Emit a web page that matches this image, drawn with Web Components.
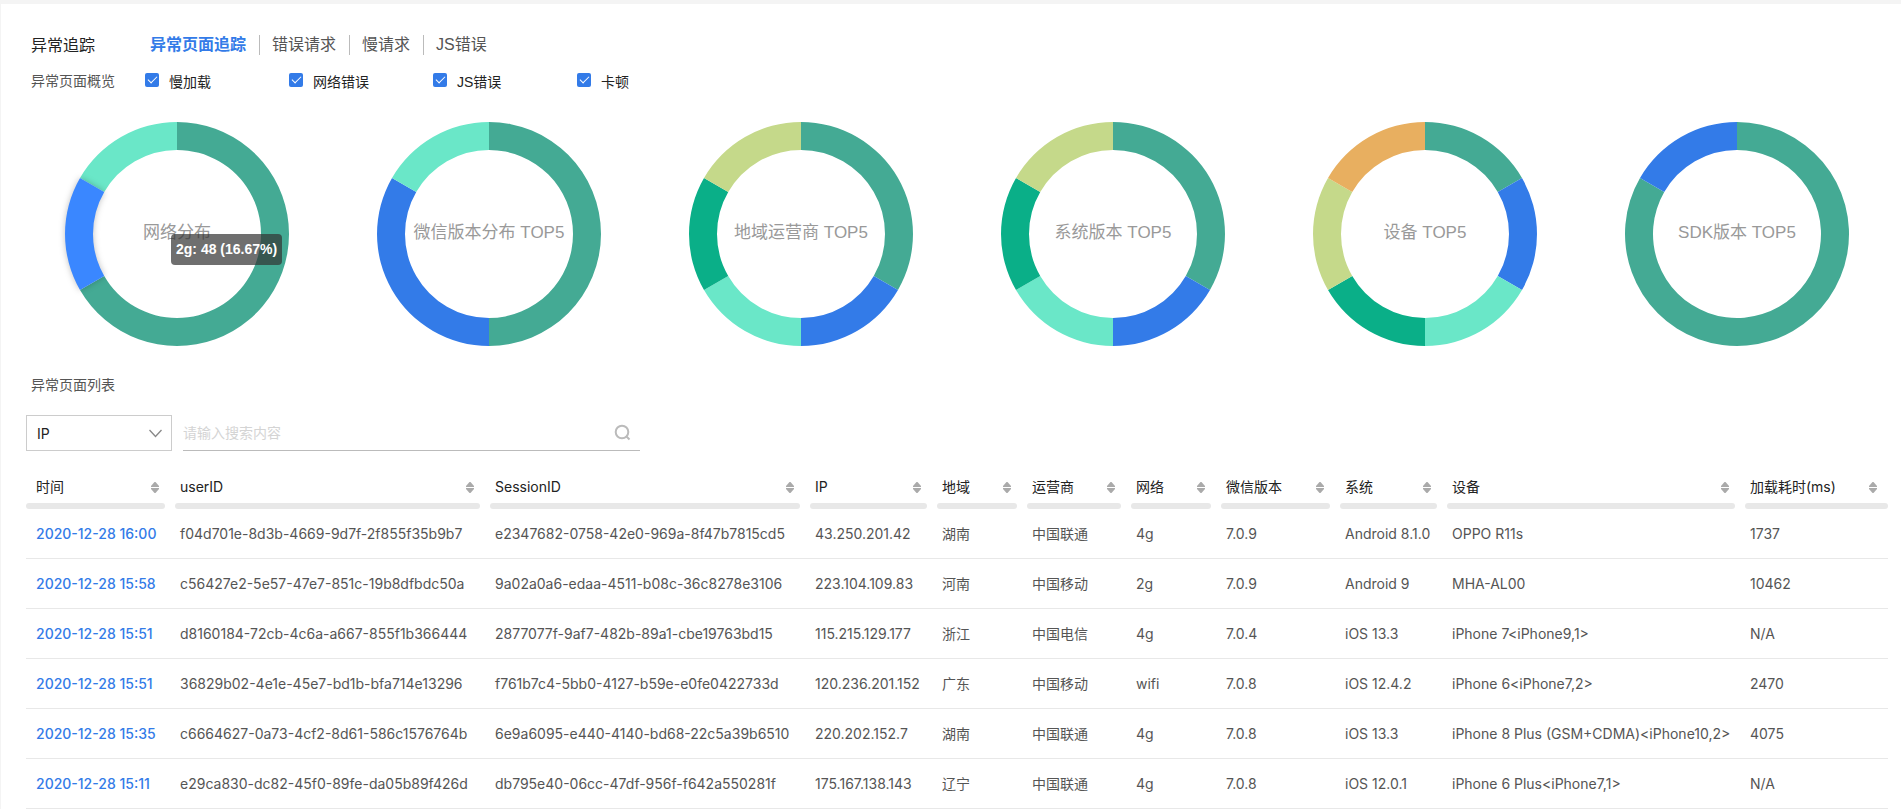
<!DOCTYPE html>
<html lang="zh-CN">
<head>
<meta charset="utf-8">
<title>异常追踪</title>
<style>
body { margin: 0; background: #fff; font-family: Inter, "Liberation Sans", "Noto Sans CJK SC", sans-serif; font-size: 14px; color: #555; }
</style>
</head>
<body>
<trace-page></trace-page>
<script>
const define = (name, html, setup) => {
  const tpl = document.createElement('template');
  tpl.innerHTML = html;
  customElements.define(name, class extends HTMLElement {
    connectedCallback() {
      if (this.shadowRoot) return;
      this.attachShadow({ mode: 'open' }).append(tpl.content.cloneNode(true));
      if (setup) setup(this, this.shadowRoot);
    }
  });
};

define('trace-tabs', `
<style>
:host { display: flex; align-items: center; font-family: "Liberation Sans", "Noto Sans CJK SC", sans-serif; font-size: 16px; line-height: 20px; }
nav { display: flex; }
a { color: #555; text-decoration: none; padding: 0 13px 0 12px; border-left: 1px solid #bbb; }
a:first-child { border-left: 0; padding-left: 0; color: #337be8; font-weight: 700; }
</style>
<nav><a href="#page" aria-current="page">异常页面追踪</a><a href="#request">错误请求</a><a href="#slow">慢请求</a><a href="#js">JS错误</a></nav>`);

define('check-item', `
<style>
:host { display: block; font-family: "Liberation Sans", "Noto Sans CJK SC", sans-serif; }
label { display: flex; align-items: center; gap: 10px; color: #222; line-height: 20px; padding-top: 2px; }
input { appearance: none; margin: 0 0 5px; width: 14px; height: 14px; border-radius: 2px; background: #337be8; display: grid; place-items: center; }
input:checked::before { content: ""; width: 9px; height: 5px; box-sizing: border-box; border: solid #fff; border-width: 0 0 1px 1px; transform: rotate(-45deg); margin-bottom: 3px; }
</style>
<label><input type="checkbox" checked><slot></slot></label>`);

define('ring-chart', `
<style>
:host { display: flex; justify-content: center; }
.ring { position: relative; display: grid; place-items: center; }
svg { display: block; grid-area: 1 / 1; overflow: visible; }
.title { grid-area: 1 / 1; font-family: "Liberation Sans", "Noto Sans CJK SC", sans-serif; font-size: 17px; line-height: 20px; color: #999; white-space: nowrap; padding-bottom: 2px; }
::slotted([slot=tip]) { position: absolute; left: 106px; top: 112px; }
</style>
<div class="ring">
<svg width="224" height="224" viewBox="-112 -112 224 224" aria-hidden="true"></svg>
<span class="title"><slot></slot></span>
<slot name="tip"></slot>
</div>`, (host, root) => {
  const svg = root.querySelector('svg');
  const at = (r, t) => {
    const a = t / 6 * 2 * Math.PI;
    return (r * Math.sin(a)).toFixed(2) + ' ' + (-r * Math.cos(a)).toFixed(2);
  };
  let from = 0, raised = null;
  for (const part of host.getAttribute('parts').split(' ')) {
    const [share, color, active] = part.split(':');
    const to = from + Number(share), big = share > 3 ? 1 : 0;
    const path = document.createElementNS('http://www.w3.org/2000/svg', 'path');
    path.setAttribute('d', `M${at(112, from)}A112 112 0 ${big} 1 ${at(112, to)}L${at(84, to)}A84 84 0 ${big} 0 ${at(84, from)}Z`);
    path.setAttribute('fill', color);
    if (active) { path.style.filter = 'drop-shadow(0 0 3px rgba(0,0,0,.25))'; raised = path; }
    svg.append(path);
    from = to;
  }
  if (raised) svg.append(raised);
});

define('chart-tip', `
<style>
:host { display: block; box-sizing: border-box; padding: 5px; height: 31px; border-radius: 4px; background: rgba(50,50,50,.7); color: #fff; font: 700 14px/20px "Liberation Sans", sans-serif; white-space: nowrap; }
</style><slot></slot>`);

define('search-bar', `
<style>
:host { display: flex; gap: 11px; }
.pick { display: grid; width: 146px; }
select { grid-area: 1 / 1; appearance: none; box-sizing: border-box; height: 36px; border: 1px solid #ccc; border-radius: 0; background: #fff; color: #222; font: inherit; padding: 0 10px; }
.pick svg { grid-area: 1 / 1; place-self: center end; margin-right: 10px; pointer-events: none; }
.find { display: flex; align-items: center; box-sizing: border-box; width: 457px; height: 36px; border-bottom: 1px solid #bbb; }
input { flex: 1; border: 0; outline: 0; padding: 0; font: inherit; color: #222; background: none; }
input::placeholder { color: #d4d4d4; }
button { border: 0; padding: 0; margin-right: 9px; background: none; display: flex; }
</style>
<div class="pick"><select aria-label="搜索字段"><option>IP</option></select>
<svg width="13" height="9" viewBox="0 0 13 9" fill="none" stroke="#888" stroke-width="1.3"><path d="M.5 1l6 6.500 6-6.500"/></svg></div>
<div class="find"><input type="text" aria-label="搜索" placeholder="请输入搜索内容">
<button aria-label="搜索"><svg width="17" height="17" viewBox="0 0 17 17" fill="none" stroke="#bbb" stroke-width="2"><circle cx="8" cy="8" r="6.300"/><path d="M12 12l3.500 3.500"/></svg></button></div>`);

define('sort-mark', `
<style>:host { display: block; } svg { display: block; }</style>
<svg width="8" height="11" viewBox="0 0 8 11" fill="#aaa"><path d="M3.500 0h1L8 4v1H0V4z"/><path d="M3.500 11h1L8 7V6H0v1z"/></svg>`);

define('trace-table', `
<style>
:host { display: block; }
table { width: 100%; border-collapse: separate; border-spacing: 0; table-layout: fixed; }
th { padding: 0; font-weight: 400; color: #222; text-align: left; }
.head { display: flex; justify-content: space-between; align-items: center; height: 32px; padding: 0 11px 0 10px; line-height: 20px; white-space: nowrap; }
.bar { height: 6px; border-radius: 3px; background: #e8e8e8; margin: 0 5px; }
th:first-child .bar { margin-left: 0; }
th:last-child .bar { margin-right: 0; }
td { height: 49px; padding: 0 0 0 10px; border-bottom: 1px solid #e8e8e8; line-height: 20px; white-space: nowrap; }
a { color: #337be8; text-decoration: none; font-weight: 500; }
</style>
<table><colgroup></colgroup><thead><tr></tr></thead><tbody></tbody></table>`, (host, root) => {
  const columns = [['时间', 144], ['userID', 315], ['SessionID', 320], ['IP', 127], ['地域', 90], ['运营商', 104], ['网络', 90], ['微信版本', 119], ['系统', 107], ['设备', 298], ['加载耗时(ms)', 148]];
  const rows = [
    ['2020-12-28 16:00', 'f04d701e-8d3b-4669-9d7f-2f855f35b9b7', 'e2347682-0758-42e0-969a-8f47b7815cd5', '43.250.201.42', '湖南', '中国联通', '4g', '7.0.9', 'Android 8.1.0', 'OPPO R11s', '1737'],
    ['2020-12-28 15:58', 'c56427e2-5e57-47e7-851c-19b8dfbdc50a', '9a02a0a6-edaa-4511-b08c-36c8278e3106', '223.104.109.83', '河南', '中国移动', '2g', '7.0.9', 'Android 9', 'MHA-AL00', '10462'],
    ['2020-12-28 15:51', 'd8160184-72cb-4c6a-a667-855f1b366444', '2877077f-9af7-482b-89a1-cbe19763bd15', '115.215.129.177', '浙江', '中国电信', '4g', '7.0.4', 'iOS 13.3', 'iPhone 7<iPhone9,1>', 'N/A'],
    ['2020-12-28 15:51', '36829b02-4e1e-45e7-bd1b-bfa714e13296', 'f761b7c4-5bb0-4127-b59e-e0fe0422733d', '120.236.201.152', '广东', '中国移动', 'wifi', '7.0.8', 'iOS 12.4.2', 'iPhone 6<iPhone7,2>', '2470'],
    ['2020-12-28 15:35', 'c6664627-0a73-4cf2-8d61-586c1576764b', '6e9a6095-e440-4140-bd68-22c5a39b6510', '220.202.152.7', '湖南', '中国联通', '4g', '7.0.8', 'iOS 13.3', 'iPhone 8 Plus (GSM+CDMA)<iPhone10,2>', '4075'],
    ['2020-12-28 15:11', 'e29ca830-dc82-45f0-89fe-da05b89f426d', 'db795e40-06cc-47df-956f-f642a550281f', '175.167.138.143', '辽宁', '中国联通', '4g', '7.0.8', 'iOS 12.0.1', 'iPhone 6 Plus<iPhone7,1>', 'N/A']
  ];
  const total = columns.reduce((sum, c) => sum + c[1], 0);
  root.querySelector('colgroup').innerHTML = columns.map(c => `<col style="width:${c[1] / total * 100}%">`).join('');
  root.querySelector('thead tr').innerHTML = columns.map(c => `<th scope="col"><div class="head"><span>${c[0]}</span><sort-mark></sort-mark></div><div class="bar"></div></th>`).join('');
  const body = root.querySelector('tbody');
  for (const row of rows) {
    const tr = body.insertRow();
    row.forEach((text, i) => {
      const td = tr.insertCell();
      if (i) { td.textContent = text; return; }
      const link = document.createElement('a');
      link.href = '#session';
      link.textContent = text;
      td.append(link);
    });
  }
});

define('trace-page', `
<style>
:host { display: block; border-top: 4px solid #f4f4f4; border-left: 1px solid #f4f4f4; }
header { display: flex; align-items: center; padding: 31px 30px 0; }
h1 { margin: 0; width: 119px; font-size: 16px; line-height: 20px; font-weight: 400; color: #222; }
.checks { display: flex; align-items: center; padding: 15px 30px 0; }
h2 { margin: 0; font-size: 14px; line-height: 20px; font-weight: 400; color: #555; }
.checks h2 { width: 114px; }
check-item { width: 144px; }
.charts { display: grid; grid-template-columns: repeat(6, 1fr); margin: 30px 8px 0 20px; }
.list { padding: 29px 30px 0; }
search-bar { margin: 20px 0 0 25px; }
trace-table { margin: 20px 13px 0 25px; }
</style>
<header><h1>异常追踪</h1><trace-tabs></trace-tabs></header>
<section class="checks"><h2>异常页面概览</h2><check-item>慢加载</check-item><check-item>网络错误</check-item><check-item>JS错误</check-item><check-item>卡顿</check-item></section>
<section class="charts">
<ring-chart parts="4:#44aa94 1:#3a87ff:on 1:#6ae7c8">网络分布<chart-tip slot="tip">2g: 48 (16.67%)</chart-tip></ring-chart>
<ring-chart parts="3:#44aa94 2:#337be8 1:#6ae7c8">微信版本分布 TOP5</ring-chart>
<ring-chart parts="2:#44aa94 1:#337be8 1:#6ae7c8 1:#0aaf88 1:#c5d98a">地域运营商 TOP5</ring-chart>
<ring-chart parts="2:#44aa94 1:#337be8 1:#6ae7c8 1:#0aaf88 1:#c5d98a">系统版本 TOP5</ring-chart>
<ring-chart parts="1:#44aa94 1:#337be8 1:#6ae7c8 1:#0aaf88 1:#c5d98a 1:#e8af60">设备 TOP5</ring-chart>
<ring-chart parts="5:#44aa94 1:#337be8">SDK版本 TOP5</ring-chart>
</section>
<section class="list"><h2>异常页面列表</h2></section>
<search-bar></search-bar>
<trace-table></trace-table>`);
</script>
</body>
</html>
